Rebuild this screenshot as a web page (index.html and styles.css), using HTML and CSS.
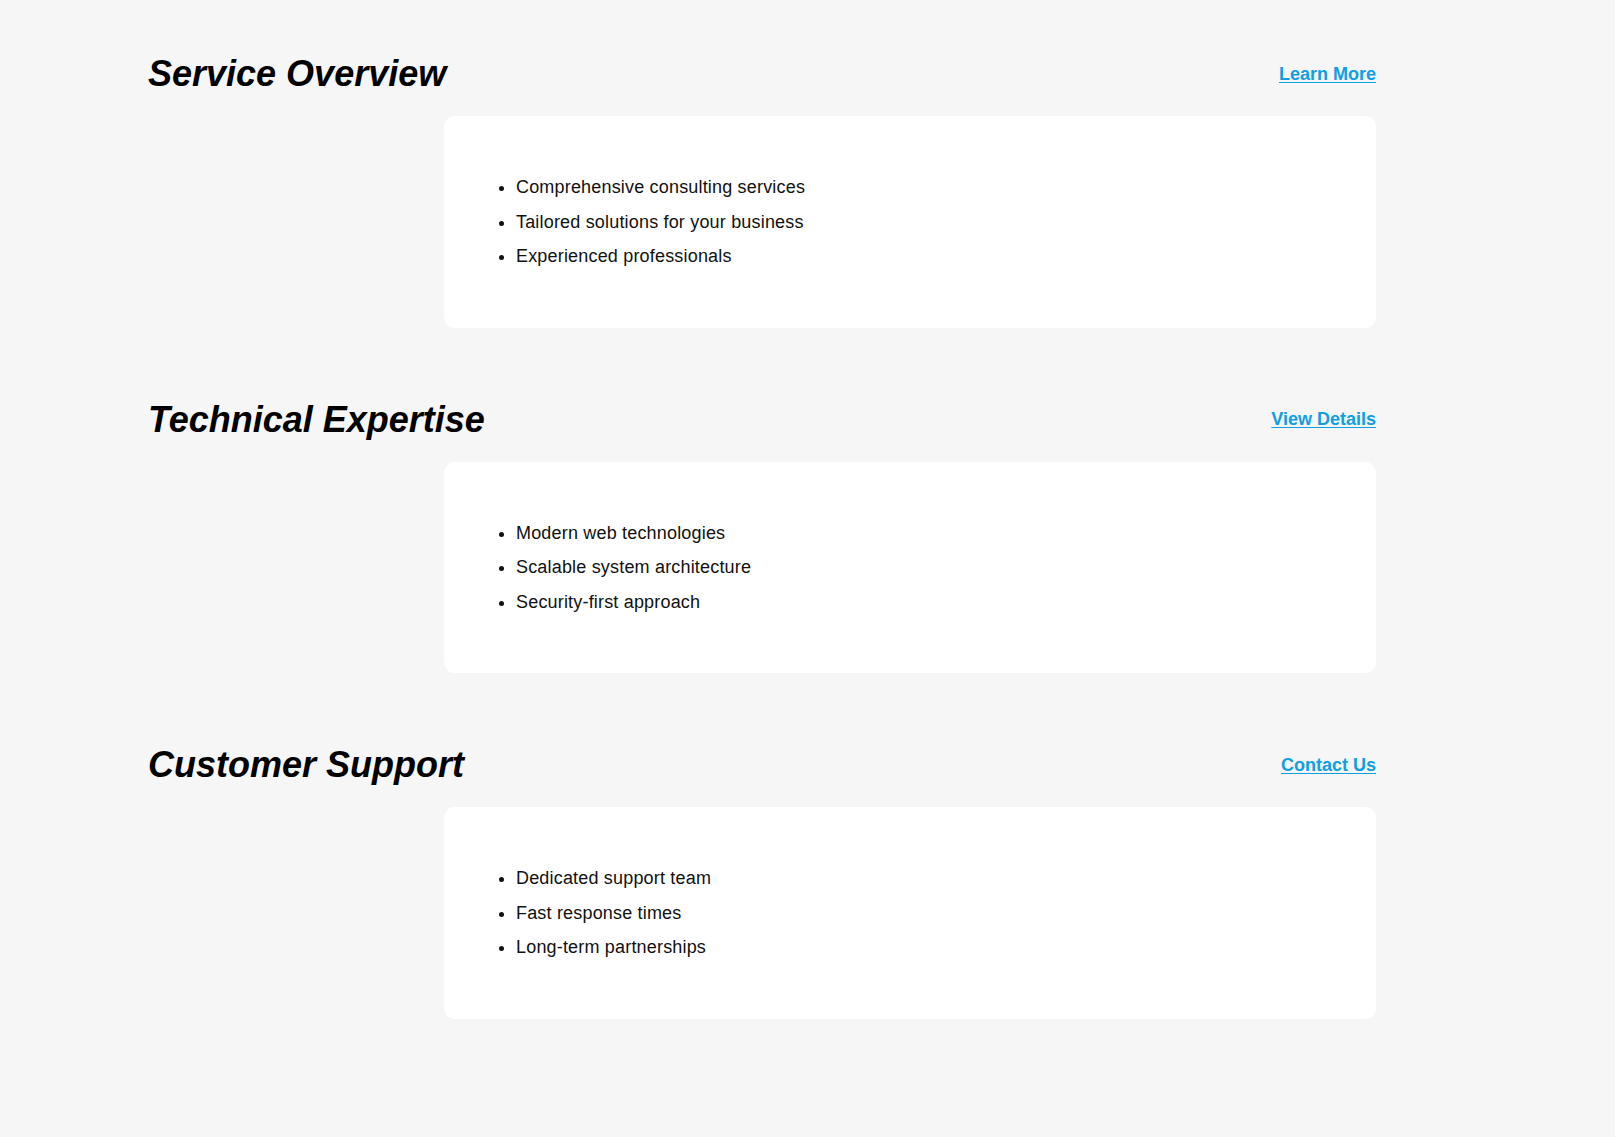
FILE: index.html
```html
<!DOCTYPE html>
<html lang="en">
<head>
<meta charset="utf-8">
<title>Services</title>
<link rel="stylesheet" href="styles.css">
</head>
<body>
<main class="page">
  <section class="section">
    <div class="section-head">
      <h2 class="section-title">Service Overview</h2>
      <a class="section-link" href="#">Learn More</a>
    </div>
    <div class="card">
      <ul class="card-list">
        <li>Comprehensive consulting services</li>
        <li>Tailored solutions for your business</li>
        <li>Experienced professionals</li>
      </ul>
    </div>
  </section>
  <section class="section">
    <div class="section-head">
      <h2 class="section-title">Technical Expertise</h2>
      <a class="section-link" href="#">View Details</a>
    </div>
    <div class="card">
      <ul class="card-list">
        <li>Modern web technologies</li>
        <li>Scalable system architecture</li>
        <li>Security-first approach</li>
      </ul>
    </div>
  </section>
  <section class="section">
    <div class="section-head">
      <h2 class="section-title">Customer Support</h2>
      <a class="section-link" href="#">Contact Us</a>
    </div>
    <div class="card">
      <ul class="card-list">
        <li>Dedicated support team</li>
        <li>Fast response times</li>
        <li>Long-term partnerships</li>
      </ul>
    </div>
  </section>
</main>
</body>
</html>
```
FILE: styles.css
```css
html, body {
  margin: 0;
  padding: 0;
  background: #f6f6f6;
}

body {
  font-family: "Liberation Sans", Arial, sans-serif;
  color: #111;
}

.page {
  width: 1228px;
  padding: 52px 0 80px 148px;
  display: flex;
  flex-direction: column;
  gap: 70px;
}

.section {
  display: flex;
  flex-direction: column;
  gap: 20px;
}

.section-head {
  display: flex;
  justify-content: space-between;
  align-items: center;
  height: 44px;
}

.section-title {
  margin: 0;
  font-size: 36px;
  line-height: 44px;
  font-weight: 700;
  font-style: italic;
  color: #000;
}

.section-link {
  font-size: 18px;
  font-weight: 700;
  color: #0ea0e0;
  text-decoration: underline;
  text-underline-offset: 2px;
}

.card {
  margin-left: 296px;
  background: #fff;
  border-radius: 11px;
  padding: 32px;
}

.card-list {
  margin: 22px 0;
  padding-left: 40px;
  font-size: 18px;
  line-height: 34.5px;
  letter-spacing: 0.18px;
  color: #111;
}
```
